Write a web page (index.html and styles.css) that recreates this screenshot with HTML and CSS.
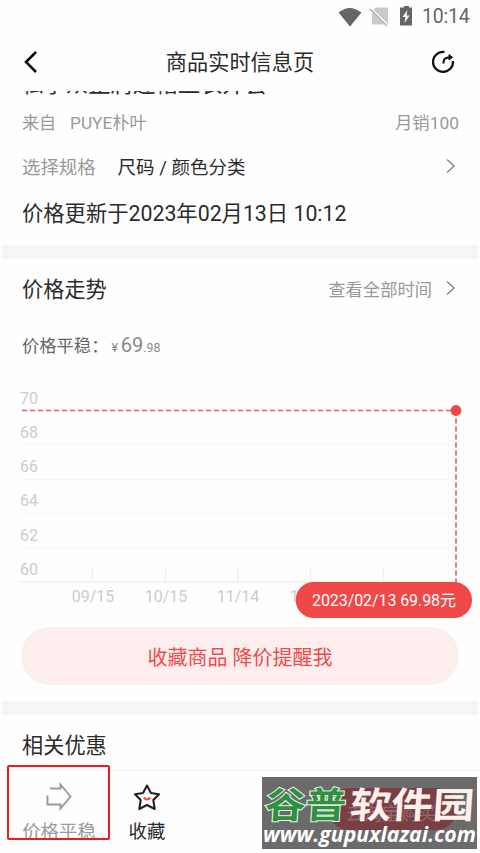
FILE: index.html
```
<!DOCTYPE html>
<html lang="zh-CN">
<head>
<meta charset="utf-8">
<title>商品实时信息页</title>
<link rel="stylesheet" href="styles.css">
</head>
<body>
<div class="screen">
  <div class="status">
    <svg class="status-icons" width="76" height="24" viewBox="0 0 76 24">
      <path d="M0.5 7.6Q11.500 -1.800 23.500 7.600L12 21.500Z" fill="#666"/>
      <path d="M38 2.500H50V19.500H34V6.500Z" fill="#c9c9c9"/>
      <path d="M32 3.500L50 21" stroke="#fff" stroke-width="3"/>
      <path d="M32 4L49 21" stroke="#aaa" stroke-width="1.500"/>
      <path d="M63.500 2.500H66V1H71V2.500H74V20.500H62V2.500Z" fill="#666"/>
      <path d="M69.500 5L64.500 12H67.500L66.500 18L71.500 10.500H68.500Z" fill="#fff"/>
    </svg>
    <span class="clock">10:14</span>
  </div>
  <header class="header">
    <svg width="14" height="24" viewBox="0 0 14 24"><path d="M12 2L2 12L12 22" fill="none" stroke="#000" stroke-width="2.500"/></svg>
    <h1>商品实时信息页</h1>
    <svg width="24" height="24" viewBox="0 0 24 24" fill="none" stroke="#111" stroke-width="2.200"><path d="M13.500 2A10 10 0 1 0 22 11"/><path d="M12.500 13.500C12 9 14.500 7.300 19 7.300"/><path d="M18 4.500L21.500 7.300L18 10Z" fill="#111" stroke-width="1"/></svg>
  </header>
  <section class="product">
    <div class="name"><span>私享众正肩连帽上衣外套</span></div>
    <div class="row source"><span>来自</span><span class="shop">PUYE朴叶</span><span class="end">月销100</span></div>
    <div class="row spec"><span class="muted">选择规格</span><span class="choice">尺码 / 颜色分类</span>
      <svg class="end" width="10" height="16" viewBox="0 0 10 16"><path d="M1 1.500L8 8L1 14.500" fill="none" stroke="#888" stroke-width="1.500"/></svg></div>
    <div class="updated">价格更新于2023年02月13日 10:12</div>
  </section>
  <div class="divider"></div>
  <section class="trend">
    <div class="row trend-head"><h2>价格走势</h2><span class="end range">查看全部时间</span>
      <svg width="10" height="16" viewBox="0 0 10 16"><path d="M1 1.500L8 8L1 14.500" fill="none" stroke="#888" stroke-width="1.500"/></svg></div>
    <div class="stable"><span>价格平稳：</span><span class="price"><small>¥</small>69<small>.98</small></span></div>
    <svg class="chart" width="480" height="242" viewBox="0 380 480 242">
      <g stroke="#f7f7f7"><path d="M20 444.500H456M20 479.500H456M20 513.500H456M20 547.500H456"/></g>
      <path d="M20 582H456M92.500 568V582M165.500 568V582M238 568V582M310.500 568V582M383.500 568V582" stroke="#f1f1f1" stroke-width="1.500"/>
      <g class="axis"><text x="20" y="403.500">70</text><text x="20" y="438">68</text><text x="20" y="472">66</text><text x="20" y="506">64</text><text x="20" y="540.500">62</text><text x="20" y="575">60</text></g>
      <g class="axis dates"><text x="93" y="602">09/15</text><text x="166" y="602">10/15</text><text x="238" y="602">11/14</text><text x="311" y="602">12/14</text></g>
      <path d="M22 410.500H456" stroke="#e85b5b" stroke-width="1.500" stroke-dasharray="5 3"/>
      <path d="M456 410.500V583" stroke="#dd6b6b" stroke-width="1.800" stroke-dasharray="5 3"/>
      <circle cx="456" cy="410.500" r="5.400" fill="#f04747"/>
      <rect x="295.700" y="582" width="176.300" height="36" rx="18" fill="#f04747"/>
      <text class="tip" x="312" y="606" textLength="144">2023/02/13 69.98元</text>
    </svg>
    <div class="remind">收藏商品 降价提醒我</div>
  </section>
  <div class="divider"></div>
  <section class="offers"><h2>相关优惠</h2></section>
  <footer class="tabs">
    <div class="tab steady">
      <svg width="28" height="30" viewBox="0 0 28 30"><path d="M5 7.500H15.500V3.500L25.500 15.500L15.500 27.500V23.500H2.500V14.500" fill="none" stroke="#999" stroke-width="1.900"/></svg>
      <span>价格平稳</span>
    </div>
    <div class="tab collect">
      <svg width="28" height="30" viewBox="0 0 28 30" fill="none" stroke="#222" stroke-width="2.100" stroke-linejoin="round"><path d="M14 4.500L17.900 12L26 13.200L20.300 19L21.700 28L14 24L6.300 28L7.700 19L2 13.200L10.100 12Z"/><path d="M10.800 16.500Q14 20.500 17.200 16.500" stroke="#f04747"/></svg>
      <span>收藏</span>
    </div>
    <svg class="watermark" width="215" height="73" viewBox="0 0 215 73">
      <rect width="215" height="72" fill="#6b6b6b"/>
      <rect x="66" y="11" width="129" height="42" rx="21" fill="#7a3f42"/>
      <text class="buy" x="84" y="43">去淘宝购买</text>
      <g class="brand" transform="skewX(-4)"><text class="green" transform="translate(5 41) scale(1.13 1)">谷普</text><text class="white" transform="translate(90 41) scale(1.15 1)">软件园</text></g>
      <text class="url" x="1" y="65" textLength="213" lengthAdjust="spacingAndGlyphs">www.gupuxlazai.com</text>
    </svg>
    <div class="highlight"></div>
  </footer>
</div>
</body>
</html>
```
FILE: styles.css
```
* { box-sizing: border-box; }
body { margin: 0; background: #fff; font-family: Roboto, "Noto Sans CJK SC", sans-serif; color: #2b2b2b; }
h1, h2 { margin: 0; font-weight: 400; }
svg { display: block; flex: none; }
.screen { width: 480px; height: 853px; overflow: hidden; background: #fefefe; }
.status { height: 32px; display: flex; justify-content: flex-end; align-items: center; gap: 8px; padding: 0 10px 0 0; }
.status-icons { margin-top: 2px; }
.clock { font-size: 19.5px; color: #666; width: 48px; white-space: nowrap; letter-spacing: -.2px; }
.header { height: 59px; display: grid; grid-template-columns: 60px 1fr 60px; align-items: center; }
.header svg:first-child { margin-left: 24px; }
.header svg:last-child { margin-left: 11px; }
.header h1 { font-size: 21.2px; line-height: 32px; margin-top: 2px; text-align: center; }
.product { height: 154px; padding: 0 21px 0 22px; }
.name { height: 5px; overflow: hidden; display: flex; align-items: flex-end; font-size: 22.4px; line-height: 30px; white-space: nowrap; }
.name span { margin-bottom: -3px; margin-left: -1px; }
.row { display: flex; align-items: center; }
.end { margin-left: auto; }
.source { height: 51px; color: #999; font-size: 17px; }
.shop { margin-left: 14px; font-size: 17.3px; }
.source .end { font-size: 17.4px; }
.spec { height: 38px; font-size: 18.4px; }
.spec svg, .trend-head svg { margin-right: 3px; }
.muted { color: #999; }
.choice { margin-left: 22px; font-size: 18.5px; }
.updated { font-size: 21.3px; line-height: 57px; white-space: nowrap; }
.divider { height: 14px; margin: 0 2px; background: #f6f6f6; }
.trend { height: 442px; }
.trend-head { height: 60px; padding: 0 21px 2px 22px; }
.trend-head h2 { margin-top: -2px; }
h2 { font-size: 21.2px; }
.range { color: #999; font-size: 17.3px; margin-right: 14px; }
.stable { height: 61px; padding: 0 22px; display: flex; line-height: 55px; font-size: 17.3px; color: #666; }
.price { font-size: 20px; line-height: 53px; color: #888; margin-left: 3px; }
.price small { font-size: 12.2px; }
.price small:first-child { margin-right: 3px; }
.axis { font-size: 16px; fill: #ccc; }
.dates { text-anchor: middle; }
.tip { font-size: 16px; fill: #fff; }
.remind { width: 438px; height: 58px; margin: 5px 0 0 21px; border-radius: 29px; background: #ffeeee; color: #ef4a4a; font-size: 20px; display: flex; align-items: center; justify-content: center; }
.offers { height: 55px; padding-left: 22px; line-height: 62px; }
.tabs { height: 83px; border-top: 1.5px solid #f2f2f2; position: relative; display: flex; }
.tab { display: flex; flex-direction: column; align-items: center; padding-top: 10px; }
.tab span { line-height: 28px; margin-top: 7px; font-size: 18.4px; }
.steady { margin-left: 22px; width: 74px; color: #999; }
.collect { margin-left: 14px; width: 74px; }
.watermark { position: absolute; left: 262px; top: 6px; }
.highlight { position: absolute; left: 7px; top: -6px; width: 103px; height: 75px; border: 2px solid #ed1c1c; border-radius: 2px; }
.buy { font-size: 18px; fill: #95686a; }
.brand { font-family: "Noto Sans CJK SC", sans-serif; font-weight: 700; font-size: 36px; }
.green { fill: #2f9140; stroke: #e8f5e8; stroke-width: 2px; paint-order: stroke; }
.white { fill: #fff0f0; }
.url { font-family: "Open Sans", sans-serif; font-weight: 700; font-style: italic; font-size: 21.500px; fill: #fff; }
```
